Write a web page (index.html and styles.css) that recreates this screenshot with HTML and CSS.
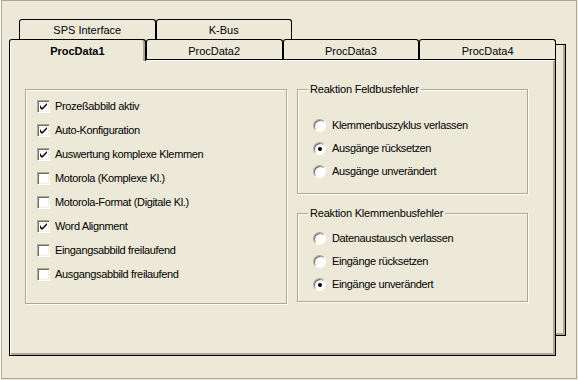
FILE: index.html
```html
<!DOCTYPE html>
<html>
<head>
<meta charset="utf-8">
<link rel="stylesheet" href="styles.css">
</head>
<body>
<div class="window">
  <div class="tabctrl">
    <div class="tabrow back-row">
      <div class="tab">SPS Interface</div>
      <div class="tab">K-Bus</div>
    </div>
    <div class="stack">
      <div class="front">
        <div class="tabrow front-row">
          <div class="tab active">ProcData1</div>
          <div class="tab">ProcData2</div>
          <div class="tab">ProcData3</div>
          <div class="tab">ProcData4</div>
        </div>
        <div class="panel">
          <div class="group options">
            <label class="check-row"><span class="cb checked"><svg width="7" height="7" viewBox="0 0 7 7"><path d="M0 2v3l2 2l5-5V-0l-5 5z" fill="#000"/></svg></span><span>Prozeßabbild aktiv</span></label>
            <label class="check-row"><span class="cb checked"><svg width="7" height="7" viewBox="0 0 7 7"><path d="M0 2v3l2 2l5-5V-0l-5 5z" fill="#000"/></svg></span><span>Auto-Konfiguration</span></label>
            <label class="check-row"><span class="cb checked"><svg width="7" height="7" viewBox="0 0 7 7"><path d="M0 2v3l2 2l5-5V-0l-5 5z" fill="#000"/></svg></span><span>Auswertung komplexe Klemmen</span></label>
            <label class="check-row"><span class="cb"></span><span>Motorola (Komplexe Kl.)</span></label>
            <label class="check-row"><span class="cb"></span><span>Motorola-Format (Digitale Kl.)</span></label>
            <label class="check-row"><span class="cb checked"><svg width="7" height="7" viewBox="0 0 7 7"><path d="M0 2v3l2 2l5-5V-0l-5 5z" fill="#000"/></svg></span><span>Word Alignment</span></label>
            <label class="check-row"><span class="cb"></span><span>Eingangsabbild freilaufend</span></label>
            <label class="check-row"><span class="cb"></span><span>Ausgangsabbild freilaufend</span></label>
          </div>
          <div class="rightcol">
            <div class="group radios feld">
              <div class="gtitle">Reaktion Feldbusfehler</div>
              <label class="radio-row"><span class="rb"></span><span>Klemmenbuszyklus verlassen</span></label>
              <label class="radio-row"><span class="rb on"></span><span>Ausgänge rücksetzen</span></label>
              <label class="radio-row"><span class="rb"></span><span>Ausgänge unverändert</span></label>
            </div>
            <div class="group radios klemm">
              <div class="gtitle">Reaktion Klemmenbusfehler</div>
              <label class="radio-row"><span class="rb"></span><span>Datenaustausch verlassen</span></label>
              <label class="radio-row"><span class="rb"></span><span>Eingänge rücksetzen</span></label>
              <label class="radio-row"><span class="rb on"></span><span>Eingänge unverändert</span></label>
            </div>
          </div>
        </div>
      </div>
      <div class="backpanel"></div>
    </div>
  </div>
</div>
</body>
</html>
```

FILE: styles.css
```css
* { box-sizing: border-box; }

html, body {
  margin: 0;
  background: #ece9d8;
}

body {
  font-family: "Liberation Sans", Arial, sans-serif;
  font-size: 11px;
  color: #000;
  overflow: hidden;
}

.window {
  margin-left: 1px;
  width: 576px;
  height: 379px;
  border: 1px solid #aca899;
  box-shadow: -1px 0 0 #fff;
}

.tabctrl {
  padding: 18px 0 0 7px;
}

.tabrow {
  display: flex;
  align-items: flex-start;
  height: 20px;
}

.back-row {
  margin-left: 10px;
  width: 273px;
}

.tab {
  flex: 1;
  height: 20px;
  border: 1px solid #000;
  border-bottom: none;
  border-radius: 3px 3px 0 0;
  text-align: center;
  line-height: 13px;
  padding-top: 4px;
  white-space: nowrap;
  background: #ece9d8;
}

.front-row .tab {
  padding-top: 5px;
}

.front-row .tab.active {
  position: relative;
  z-index: 1;
  height: 22px;
  font-weight: bold;
  box-shadow: inset 1px 0 0 #fff, inset -2px 0 0 #aca899;
}

.stack {
  display: flex;
  align-items: flex-start;
}

.front {
  width: 547px;
}

.panel {
  height: 297px;
  border: 1px solid #000;
  box-shadow: inset 1px 1px 0 #fff, inset -2px -2px 0 #aca899;
  padding: 29px 0 0 15px;
  display: flex;
  align-items: flex-start;
  gap: 10px;
  letter-spacing: -0.35px;
}

.backpanel {
  width: 10px;
  height: 292px;
  margin-top: 5px;
  border: 1px solid #000;
  border-left: none;
  box-shadow: inset -2px -2px 0 #aca899;
}

.group {
  position: relative;
  border: 1px solid #aca899;
  box-shadow: inset 1px 1px 0 #fff, 1px 1px 0 #fff;
}

.options {
  width: 262px;
  height: 215px;
  padding: 10px 0 0 11px;
  display: flex;
  flex-direction: column;
  gap: 11px;
}

.check-row, .radio-row {
  display: flex;
  align-items: center;
  height: 13px;
  line-height: 13px;
  white-space: nowrap;
}

.cb {
  width: 13px;
  height: 13px;
  margin-right: 5px;
  background: #fff;
  border: 1px solid;
  border-color: #aca899 #fff #fff #aca899;
  box-shadow: inset 1px 1px 0 #716f64, inset -1px -1px 0 #f1efe2;
  display: flex;
  align-items: center;
  justify-content: center;
}

.cb svg {
  display: block;
}

.rightcol {
  display: flex;
  flex-direction: column;
  gap: 19px;
}

.radios {
  width: 231px;
  padding-left: 15px;
  display: flex;
  flex-direction: column;
  gap: 10px;
}

.feld {
  height: 105px;
  padding-top: 29px;
}

.klemm {
  height: 89px;
  padding-top: 18px;
}

.gtitle {
  position: absolute;
  top: -7px;
  left: 10px;
  padding: 0 2px;
  line-height: 13px;
  background: #ece9d8;
  white-space: nowrap;
  letter-spacing: -0.2px;
}

.rb {
  position: relative;
  width: 13px;
  height: 13px;
  margin-right: 6px;
  border-radius: 50%;
  background: #fff;
  border: 1px solid;
  border-color: #aca899 #fff #fff #aca899;
  box-shadow: inset 1px 1px 0 #716f64;
}

.rb.on::after {
  content: "";
  position: absolute;
  left: 3.5px;
  top: 3.5px;
  width: 4px;
  height: 4px;
  border-radius: 50%;
  background: #000;
}
```
